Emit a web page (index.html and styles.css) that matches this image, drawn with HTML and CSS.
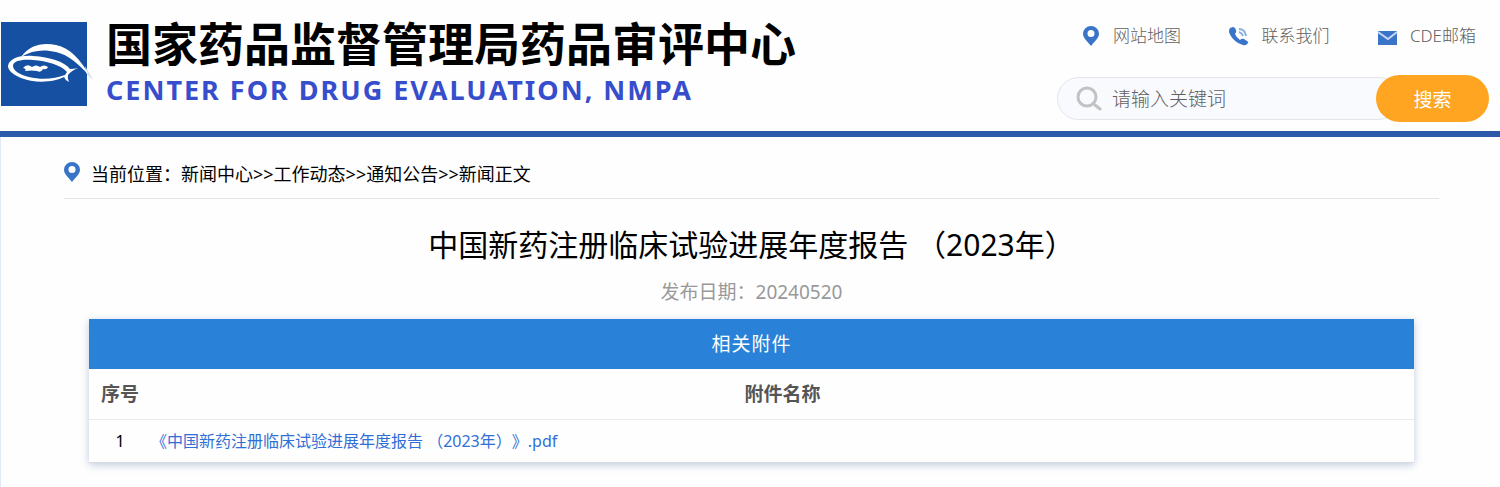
FILE: index.html
```html
<!DOCTYPE html>
<html lang="zh-CN">
  <head>
    <meta charset="UTF-8" />
    <meta name="viewport" content="width=device-width, initial-scale=1.0" />
    <title>国家药品监督管理局药品审评中心</title>
    <link rel="stylesheet" href="styles.css">
  </head>
  <body>
    <header class="header">
      <a class="brand" href="#">
        <svg class="logo" width="92" height="84" viewBox="0 0 92 84" aria-hidden="true">
          <rect width="86" height="84" fill="#1650a2" />
          <path d="M84 44L92 58L85 51Z" fill="#c9d5e8" />
          <g fill="#fff">
            <path d="M20 35C28 23 42 20 55 23C69 26 80 38 88 53C77 42 68 33 55 30C43 27 31 28 20 35Z" />
            <path fill-rule="evenodd" d="M7 44C8 36 20 33 32 34C49 35 64 40 69 47Q73 47 77 46Q70 49 67 53Q66 56 68 60Q64 58 63 55C52 61 32 61 20 56C13 53 7 49 7 44ZM12 44C12 49 20 53 28 55C40 58 54 57 64 53L66 50C60 43 46 39 32 38C20 37 12 39 12 44Z" />
            <path d="M22 46Q26 41 31 45Q35 42 39 45Q43 42 47 45Q46 48 42 47Q40 51 36 49Q31 48 24 49Q26 47 22 46Z" />
          </g>
        </svg>
        <div class="brand-text">
          <h1>国家药品监督管理局药品审评中心</h1>
          <p>CENTER FOR DRUG EVALUATION, NMPA</p>
        </div>
      </a>

      <div class="tools">
        <nav class="links">
          <a href="#">
            <svg width="20" height="20" viewBox="0 0 20 20" aria-hidden="true">
              <path fill="#3a74c9" fill-rule="evenodd" d="M10 0A8 8 0 0 1 18 8C18 12 13 16 10 20C7 16 2 12 2 8A8 8 0 0 1 10 0ZM10 4A3 3 0 0 0 10 11A3 3 0 0 0 10 4Z" />
            </svg>
            网站地图
          </a>
          <a href="#">
            <svg width="20" height="20" viewBox="0 0 20 20" aria-hidden="true">
              <path fill="#3a74c9" d="M1 2L4 1Q6 1 7 4Q8 6 6 8Q7 11 11 14Q13 12 15 13L18 15Q20 16 19 17Q17 20 14 19C7 17 2 12 0 6Q0 3 1 2Z" />
              <path fill="none" stroke="#8db0e2" stroke-width="2" d="M10 3Q16 3 17 10M10 6Q13 7 14 10" />
            </svg>
            联系我们
          </a>
          <a href="#">
            <svg width="20" height="20" viewBox="0 0 20 20" aria-hidden="true">
              <path fill="#3a74c9" d="M0 5H19V19H0Z" />
              <path fill="none" stroke="#c5d8f2" stroke-width="2" d="M0 6L10 13L19 6" />
            </svg>
            CDE邮箱
          </a>
        </nav>
        <form class="search">
          <div class="search-field">
            <svg width="26" height="26" viewBox="0 0 26 26" fill="none" stroke="#c1c2c1" aria-hidden="true">
              <circle cx="11" cy="11" r="9" stroke-width="3" />
              <path d="M19 19L24 23" stroke-width="3" stroke-linecap="round" />
            </svg>
            <input type="text" placeholder="请输入关键词" aria-label="请输入关键词" />
          </div>
          <button type="button">搜索</button>
        </form>
      </div>
    </header>

    <main class="content">
      <nav class="breadcrumb">
        <svg width="16" height="20" viewBox="2 0 16 20" aria-hidden="true">
          <path fill="#3a74c9" fill-rule="evenodd" d="M10 0A8 8 0 0 1 18 8C18 12 13 16 10 20C7 16 2 12 2 8A8 8 0 0 1 10 0ZM10 4A3 3 0 0 0 10 11A3 3 0 0 0 10 4Z" />
        </svg>
        <span>当前位置：<a href="#">新闻中心</a>&gt;&gt;<a href="#">工作动态</a>&gt;&gt;<a href="#">通知公告</a>&gt;&gt;新闻正文</span>
      </nav>

      <article>
        <h2>中国新药注册临床试验进展年度报告 （2023年）</h2>
        <p class="date">发布日期：20240520</p>

        <div class="card">
          <table class="attachments">
            <caption>相关附件</caption>
            <thead>
              <tr>
                <th class="index">序号</th>
                <th>附件名称</th>
              </tr>
            </thead>
            <tbody>
              <tr>
                <td class="index">1</td>
                <td><a href="#">《中国新药注册临床试验进展年度报告 （2023年）》.pdf</a></td>
              </tr>
            </tbody>
          </table>
        </div>
      </article>
    </main>
  </body>
</html>
```
FILE: styles.css
```css
* {
  margin: 0;
  padding: 0;
  box-sizing: border-box;
}

body {
  font-family: "Noto Sans", "Noto Sans CJK SC", sans-serif;
  text-spacing-trim: space-all;
  background: #fefefe;
  color: #000;
  min-height: 100vh;
  display: flex;
  flex-direction: column;
}

a {
  color: inherit;
  text-decoration: none;
}

svg {
  flex: none;
}

.header {
  display: flex;
  justify-content: space-between;
  padding: 16px 11px 9px 1px;
  border-bottom: 6px solid #2b5aaa;
}

.brand {
  display: flex;
  gap: 13px;
}

.logo {
  margin-top: 6px;
}

.brand-text h1 {
  font-size: 46px;
  line-height: 54px;
}

.brand-text p {
  color: #364dcc;
  font-size: 27px;
  font-weight: bold;
  line-height: 40px;
  letter-spacing: 2px;
}

.tools {
  display: flex;
  flex-direction: column;
  gap: 27px;
  width: 432px;
}

.links {
  display: flex;
  justify-content: space-between;
  padding: 8px 13px 0 24px;
}

.links a {
  display: flex;
  align-items: center;
  gap: 12px;
  color: #606060;
  font-size: 17px;
  font-weight: 300;
  line-height: 24px;
}

.search {
  display: flex;
  align-items: center;
}

.search-field {
  flex: 1;
  display: flex;
  align-items: center;
  gap: 10px;
  height: 43px;
  margin-right: -24px;
  padding-left: 18px;
  background: #f9fafe;
  border: 1px solid #e3e5e8;
  border-radius: 22px;
}

.search-field input {
  width: 240px;
  background: none;
  border: none;
  outline: none;
  font-family: inherit;
  font-size: 19px;
  font-weight: 300;
}

.search-field input::placeholder {
  color: #606060;
}

.search button {
  width: 113px;
  height: 47px;
  background: #ffa522;
  border: none;
  border-radius: 24px;
  color: #fff;
  font-family: inherit;
  font-size: 19px;
  position: relative;
  cursor: pointer;
}

.content {
  flex: 1;
  padding: 22px 61px 22px 63px;
  border-left: 1px solid #e2e9f8;
}

.breadcrumb {
  display: flex;
  align-items: center;
  gap: 11px;
  padding-bottom: 9px;
  border-bottom: 1px solid #e4e4e4;
  font-size: 18px;
  line-height: 30px;
}

.breadcrumb svg {
  margin-bottom: 4px;
}

article {
  padding: 21px 25px 0;
}

article h2 {
  font-size: 30px;
  font-weight: normal;
  line-height: 50px;
  text-align: center;
}

.date {
  color: #999;
  font-size: 19px;
  line-height: 30px;
  margin: 7px 0 12px;
  text-align: center;
}

.card {
  box-shadow: 0 2px 8px rgba(40, 90, 150, 0.3);
}

.attachments {
  width: 100%;
  border-collapse: collapse;
}

.attachments caption {
  background: #2982d8;
  color: #fff;
  font-size: 19px;
  line-height: 50px;
  letter-spacing: 1px;
}

.attachments th {
  color: #555;
  font-size: 19px;
  line-height: 50px;
  border-bottom: 1px solid #e8eaec;
}

.attachments td {
  font-size: 16px;
  line-height: 42px;
  border-bottom: 1px solid #d8dce2;
}

.attachments .index {
  width: 62px;
  text-align: center;
}

.attachments td a {
  color: #306fd6;
}
```
